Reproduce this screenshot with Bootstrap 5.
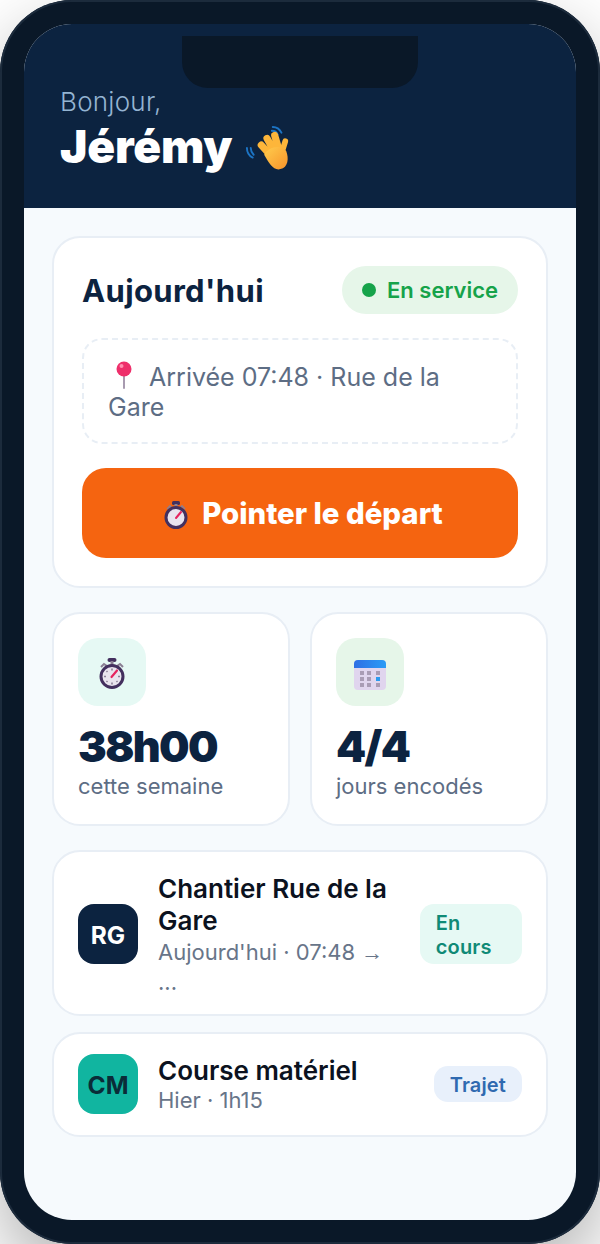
<!DOCTYPE html>
<html lang="fr">

<head>
    <meta charset="UTF-8">
    <meta name="viewport" content="width=device-width, initial-scale=1.0">
    <title>Pointage</title>
    <link href="https://cdn.jsdelivr.net/npm/bootstrap@5.3.0/dist/css/bootstrap.min.css" rel="stylesheet">
    <style>
        html, body { height: 100%; }
        body {
            margin: 0;
            background: #fff;
            font-family: Inter, "Liberation Sans", sans-serif;
            overflow: hidden;
        }
        .phone {
            height: 1244px;
            width: 600px;
            padding: 24px;
            background: #0a1828;
            border-radius: 72px;
            box-shadow: inset 0 0 0 2px #1c2b3c, 0 30px 70px rgba(0, 0, 0, .3);
        }
        .screen {
            height: 1196px;
            background: #f6fafd;
            border-radius: 48px;
            overflow: hidden;
        }
        .hero {
            height: 184px;
            padding: 12px 36px 0;
            background: #0c2340;
        }
        .notch {
            width: 236px;
            height: 52px;
            background: #0a1828;
            border-radius: 0 0 26px 26px;
        }
        .hello { font-size: 26px; line-height: 32px; color: #94b4d2; font-weight: 300; letter-spacing: .25px; margin-top: -2px; }
        .who { font-size: 46px; line-height: 56px; font-weight: 900; color: #fff; margin: 0; letter-spacing: -.2px; }
        .who svg { vertical-align: -8px; margin-left: 4px; }
        .body-wrap { padding: 28px 28px 0; }
        .tile {
            background: #fff;
            border: 2px solid #e8eef5;
            border-radius: 28px;
        }
        .today { padding: 28px; height: 352px; }
        .today-title { font-size: 31px; font-weight: 700; color: #0c2340; margin: 2px 0 0; letter-spacing: .35px; }
        .state {
            height: 48px;
            padding: 0 20px;
            border-radius: 24px;
            background: #e6f6e9;
            color: #16a34a;
            font-size: 22px;
            font-weight: 600;
            gap: 11px;
        }
        .dot { width: 14px; height: 14px; border-radius: 50%; background: #16a34a; }
        .arrival {
            margin: 24px 0;
            padding: 21px 24px;
            height: 106px;
            border: 2px dashed #e8eef5;
            border-radius: 20px;
            font-size: 25px;
            line-height: 30px;
            color: #5d6d84;
        }
        .arrival svg { vertical-align: -3px; margin: 0 3px 0 1px; }
        .leave {
            height: 90px;
            padding: 3px 0 0 7px;
            border: 0;
            border-radius: 24px;
            background: #f56410;
            color: #fff;
            font-size: 29.4px;
            font-weight: 800;
            gap: 14px;
        }
        .stat { flex: 1 1 0; height: 214px; padding: 24px; }
        .stat-ico {
            width: 68px;
            height: 68px;
            padding-top: 3px;
            border-radius: 20px;
        }
        .stat-ico-low { padding-top: 6px; }
        .bg-mint { background: #e6f9f4; }
        .bg-leaf { background: #e6f6e9; }
        .stat-row { gap: 20px; }
        .stat-num { font-size: 43px; line-height: 50px; font-weight: 900; letter-spacing: -1.6px; color: #0c2340; margin-top: 15px; }
        .stat-lbl { font-size: 22px; line-height: 30px; color: #5d6d84; }
        .item { padding: 20px 24px; gap: 20px; }
        .av {
            flex: none;
            width: 60px;
            height: 60px;
            padding-top: 2px;
            border-radius: 16px;
            font-size: 24.5px;
            font-weight: 700;
        }
        .av-navy { background: #0c2340; color: #fff; }
        .av-teal { background: #11b5a0; color: #0a2c38; }
        .item-name { font-size: 26px; line-height: 31.2px; font-weight: 600; color: #0b1220; }
        .item-sub { font-size: 22px; line-height: 29.7px; color: #687589; }
        .item-text { margin: 1px 0 -1px; }
        /* the two-line row sits a touch lower than the one-line row */
        .item-tall .item-text { margin: 1px 0 -3px; }
        .item-tall .item-name { line-height: 32px; }
        .item-tall .item-sub { line-height: 30px; }
        .item-tall .av, .item-tall .tag { margin-top: 2px; }
        .arrow-glyph { font-family: "Liberation Sans", sans-serif; line-height: 1; }
        .tag { padding: 7px 16px 5px; border-radius: 14px; font-size: 20px; line-height: 24px; font-weight: 600; letter-spacing: .15px; }
        .tag-mint { background: #e6f9f4; color: #0f8a76; }
        .tag-blue { background: #e8f0fb; color: #2f6ab0; }
    </style>
</head>

<body>
    <div class="phone">
        <div class="screen">
            <div class="hero">
                <div class="notch mx-auto"></div>
                <div class="hello">Bonjour,</div>
                <h1 class="who">Jérémy
                    <svg width="46" height="46" viewBox="0 0 48 48" fill="none">
                        <defs>
                            <linearGradient id="skin" x1="0" y1="0" x2="1" y2="1">
                                <stop offset="0" stop-color="#ffcc4d" />
                                <stop offset="1" stop-color="#f7932a" />
                            </linearGradient>
                        </defs>
                        <path d="M29 2c4 0 7 2 9 6M28 6c3 0 5 1 6 4M2 24c0 4 2 8 6 10M6 24c0 3 1 5 3 7" stroke="#1c74c4" stroke-width="2" stroke-linecap="round" />
                        <g stroke="#fdb63a" stroke-linecap="round">
                            <path d="M17 21 28 33M23 14 32 30M31 11 36 28" stroke-width="7.5" />
                            <path d="M42 17 38 30" stroke-width="6" />
                        </g>
                        <path d="M20 31c3-7 17-12 23-4 3 8 2 17-6 19-7 2-12-6-17-15Z" fill="url(#skin)" />
                    </svg>
                </h1>
            </div>
            <div class="body-wrap">
                <div class="tile today mb-4">
                    <div class="d-flex justify-content-between align-items-center">
                        <h2 class="today-title">Aujourd'hui</h2>
                        <div class="state d-flex align-items-center"><span class="dot"></span>En service</div>
                    </div>
                    <div class="arrival">
                        <svg width="30" height="28" viewBox="0 0 30 28" fill="none">
                            <path d="M15 13v14" stroke="#a89bb0" stroke-width="2" stroke-linecap="round" />
                            <circle cx="15" cy="8" r="7.5" fill="#ee2f6b" />
                            <circle cx="12.5" cy="5" r="2" fill="#ff8fb0" />
                        </svg>
                        Arrivée 07:48 · Rue de la Gare
                    </div>
                    <button class="btn leave w-100 d-flex align-items-center justify-content-center" type="button">
                        <svg width="24" height="28" viewBox="0 0 24 28" fill="none">
                            <rect x="8" y="0" width="8" height="4" rx="1.5" fill="#43305e" />
                            <rect x="10.5" y="3" width="3" height="4" fill="#8a7f93" />
                            <path d="M3 8l3-3 2 2M21 8l-3-3-2 2" stroke="#8a7f93" stroke-width="1.6" />
                            <circle cx="12" cy="16.5" r="10" fill="#e9e4ee" stroke="#43305e" stroke-width="3" />
                            <path d="M12 17 17 11" stroke="#e5245f" stroke-width="2" stroke-linecap="round" />
                        </svg>
                        Pointer le départ
                    </button>
                </div>
                <div class="d-flex stat-row mb-4">
                    <div class="tile stat">
                        <div class="stat-ico bg-mint d-flex align-items-center justify-content-center">
                            <svg width="26" height="31" viewBox="0 0 26 31" fill="none">
                                <rect x="8.5" y="0" width="9" height="4" rx="2" fill="#43305e" />
                                <rect x="11.5" y="3" width="3" height="5" fill="#8a7f93" />
                                <path d="M2 9l3-3 3 2M24 9l-3-3-3 2" stroke="#8a7f93" stroke-width="2" />
                                <circle cx="13" cy="18.5" r="11" fill="#e9e4ee" stroke="#43305e" stroke-width="3" />
                                <path d="M13 10.5v2M13 24.5v2M5 18.5h2M19 18.5h2M7.5 13l1 1M18.5 24l-1-1M7.5 24l1-1" stroke="#8c8197" stroke-width="1.6" />
                                <path d="M12.5 19 18 12.5" stroke="#e5245f" stroke-width="2.2" stroke-linecap="round" />
                            </svg>
                        </div>
                        <div class="stat-num">38h00</div>
                        <div class="stat-lbl">cette semaine</div>
                    </div>
                    <div class="tile stat">
                        <div class="stat-ico stat-ico-low bg-leaf d-flex align-items-center justify-content-center">
                            <svg width="32" height="30" viewBox="0 0 32 30">
                                <defs>
                                    <linearGradient id="calTop" x1="0" y1="0" x2="1" y2="0">
                                        <stop offset="0" stop-color="#2f6fe4" />
                                        <stop offset="1" stop-color="#2a9cf6" />
                                    </linearGradient>
                                </defs>
                                <rect width="32" height="30" rx="4" fill="#e0d5ee" />
                                <path d="M0 8V4a4 4 0 0 1 4-4h24a4 4 0 0 1 4 4v4Z" fill="url(#calTop)" />
                                <g fill="#a99cb5">
                                    <rect x="6" y="11" width="4" height="4" />
                                    <rect x="13" y="11" width="4" height="4" />
                                    <rect x="22" y="11" width="4" height="4" />
                                    <rect x="6" y="17" width="4" height="4" />
                                    <rect x="13" y="17" width="4" height="4" />
                                    <rect x="6" y="23" width="4" height="4" />
                                    <rect x="13" y="23" width="4" height="4" />
                                    <rect x="22" y="23" width="4" height="4" />
                                </g>
                                <rect x="22" y="17" width="4" height="4" fill="#2b9bf0" />
                            </svg>
                        </div>
                        <div class="stat-num">4/4</div>
                        <div class="stat-lbl">jours encodés</div>
                    </div>
                </div>
                <div class="tile item item-tall d-flex align-items-center mb-3">
                    <div class="av av-navy d-flex align-items-center justify-content-center">RG</div>
                    <div class="item-text flex-grow-1">
                        <div class="item-name">Chantier Rue de la Gare</div>
                        <div class="item-sub">Aujourd'hui · 07:48 <span class="arrow-glyph">→</span> ...</div>
                    </div>
                    <span class="tag tag-mint">En cours</span>
                </div>
                <div class="tile item d-flex align-items-center">
                    <div class="av av-teal d-flex align-items-center justify-content-center">CM</div>
                    <div class="item-text flex-grow-1">
                        <div class="item-name">Course matériel</div>
                        <div class="item-sub">Hier · 1h15</div>
                    </div>
                    <span class="tag tag-blue">Trajet</span>
                </div>
            </div>
        </div>
    </div>
    <script src="https://cdn.jsdelivr.net/npm/bootstrap@5.3.0/dist/js/bootstrap.bundle.min.js"></script>
</body>

</html>
